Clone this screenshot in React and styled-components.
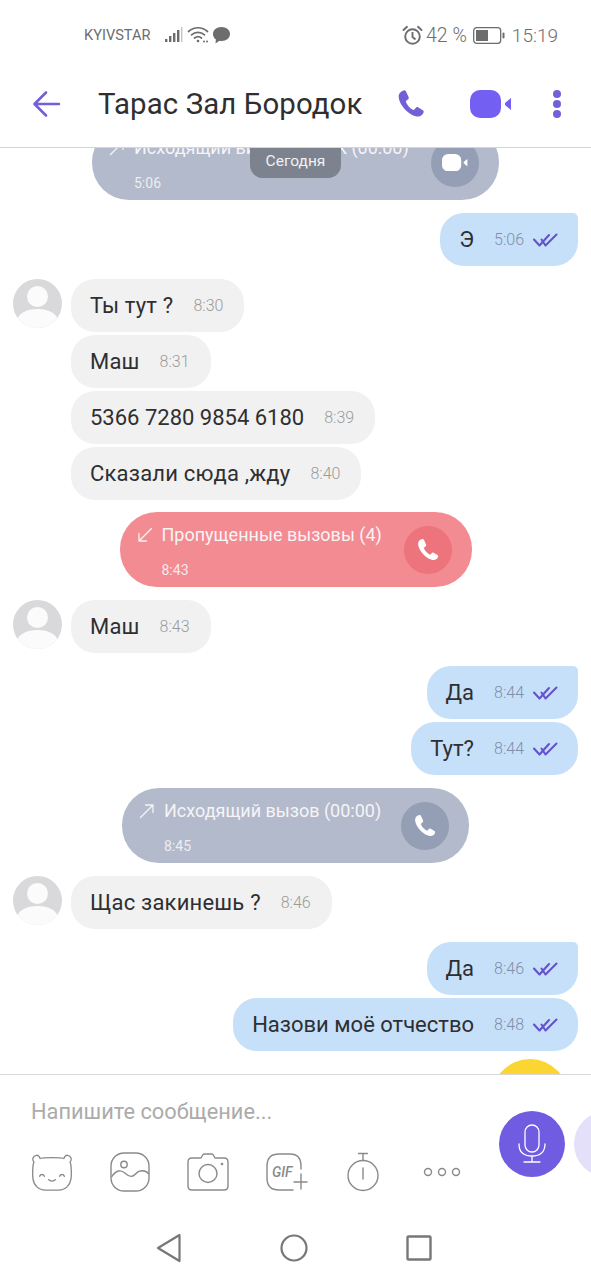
import styled, { createGlobalStyle } from 'styled-components';

const GlobalStyle = createGlobalStyle`
  html, body {
    margin: 0;
    padding: 0;
    background: #fff;
  }
  * {
    box-sizing: border-box;
  }
  body {
    font-family: Roboto, "Liberation Sans", sans-serif;
  }
`;

const Screen = styled.div`
  width: 591px;
  height: 1280px;
  display: flex;
  flex-direction: column;
  overflow: hidden;
  background: #fff;
  color: #2c2c2e;
`;

const StatusBar = styled.div`
  height: 70px;
  flex: none;
  display: flex;
  align-items: center;
  justify-content: space-between;
  padding: 0 33px 0 84px;
  color: #6d6d6d;
`;

const StatusGroup = styled.div`
  display: flex;
  align-items: center;
  gap: ${(p) => p.$gap || 3}px;
`;

const Carrier = styled.span`
  font-size: 14.6px;
  margin-right: 10px;
`;

const StatusText = styled.span`
  font-size: ${(p) => p.$size || 19}px;
  font-weight: 300;
`;

const AlarmSlot = styled.span`
  display: flex;
  margin-right: -3px;
`;

const Header = styled.div`
  height: 78px;
  flex: none;
  display: flex;
  align-items: center;
  padding: 0 29px 10px 32px;
  border-bottom: 1px solid #d4d4d4;
`;

const Title = styled.div`
  font-size: 29.4px;
  margin-left: 37px;
  flex: 1;
  color: #2f2f31;
  letter-spacing: 0.1px;
`;

const HeaderIcons = styled.div`
  display: flex;
  align-items: center;
`;

const HeaderGap = styled.div`
  width: ${(p) => p.$width}px;
`;

const Chat = styled.div`
  position: relative;
  flex: 1;
  min-height: 0;
  overflow: hidden;
  display: flex;
  flex-direction: column;
  padding: 0 13px;
`;

const DateBadge = styled.div`
  position: absolute;
  top: 0;
  left: 250px;
  width: 91px;
  height: 30px;
  background: #7d828f;
  color: #f1f1f3;
  font-size: 15.5px;
  text-align: center;
  line-height: 26px;
  border-radius: 0 0 13px 13px;
`;

const CallBubble = styled.div`
  flex: none;
  align-self: center;
  width: ${(p) => p.$width}px;
  height: 75px;
  margin-top: ${(p) => p.$top ?? 12}px;
  border-radius: 37px;
  background: ${(p) => p.$bg};
  display: flex;
  align-items: center;
  justify-content: space-between;
  padding: 0 20px 0 17px;
  color: #f7f4f6;
`;

const CallInfo = styled.div`
  display: flex;
  flex-direction: column;
  gap: 17px;
  padding-top: 3px;
`;

const CallTitle = styled.div`
  display: flex;
  align-items: center;
  gap: 9px;
  font-size: 18px;
  line-height: 20px;
  white-space: nowrap;
`;

const CallTime = styled.div`
  font-size: 14px;
  line-height: 16px;
  margin-left: 25px;
  opacity: 0.9;
`;

const CallIconCircle = styled.div`
  width: 48px;
  height: 48px;
  border-radius: 50%;
  background: ${(p) => p.$bg};
  display: flex;
  align-items: center;
  justify-content: center;
`;

const Group = styled.div`
  flex: none;
  display: flex;
  margin-top: 13px;
  gap: 9px;
  justify-content: ${(p) => (p.$out ? 'flex-end' : 'flex-start')};
`;

const Avatar = styled.div`
  width: 49px;
  height: 49px;
  border-radius: 50%;
  flex: none;
  overflow: hidden;
  background: #d9d9dc;
`;

const Stack = styled.div`
  display: flex;
  flex-direction: column;
  gap: 3px;
  align-items: ${(p) => (p.$out ? 'flex-end' : 'flex-start')};
`;

const Bubble = styled.div`
  height: 53px;
  display: flex;
  align-items: center;
  padding: ${(p) => (p.$out ? '0 20px 0 19px' : '0 21px 0 19px')};
  border-radius: 24px;
  border-top-right-radius: ${(p) => (p.$first ? 5 : 24)}px;
  background: ${(p) => (p.$out ? '#c6e0fa' : '#f1f1f1')};
`;

const BubbleText = styled.span`
  font-size: 22px;
  letter-spacing: ${(p) => p.$spacing}px;
  color: #2f2f31;
  white-space: nowrap;
`;

const BubbleTime = styled.span`
  font-size: 16px;
  font-weight: 300;
  margin-left: 20px;
  color: ${(p) => (p.$out ? '#7f8fa6' : '#9b9b9b')};
`;

const Ticks = styled.svg`
  margin-left: 9px;
`;

const StickerTop = styled.div`
  position: absolute;
  left: 490px;
  bottom: -70px;
  width: 80px;
  height: 85px;
  border-radius: 50%;
  background: #fbd531;
`;

const Composer = styled.div`
  height: 141px;
  flex: none;
  border-top: 1px solid #d8d8d8;
  display: flex;
  overflow: hidden;
`;

const ComposerMain = styled.div`
  flex: 1;
  display: flex;
  flex-direction: column;
  padding: 24px 0 0 31px;
`;

const Placeholder = styled.div`
  font-size: 21.8px;
  line-height: 26px;
  color: #ababab;
`;

const AttachRow = styled.div`
  display: flex;
  align-items: center;
  margin-top: 27px;
  gap: 37px;
`;

const DotsSvg = styled.svg`
  margin-left: 5px;
`;

const ComposerActions = styled.div`
  flex: none;
  display: flex;
  gap: 9px;
  padding-top: 36px;
  margin-right: -49px;
`;

const ActionCircle = styled.div`
  width: 66px;
  height: 66px;
  border-radius: 50%;
  background: ${(p) => p.$bg};
  display: flex;
  align-items: center;
  justify-content: center;
`;

const NavBar = styled.div`
  flex: none;
  height: 65px;
  display: flex;
  align-items: center;
  justify-content: center;
  gap: 98px;
  padding-right: 3px;
`;

function Signal() {
  return (
    <svg width="20" height="18" viewBox="0 0 20 18" fill="#6d6d6d">
      <rect x="1" y="13" width="2.4" height="3" />
      <rect x="5" y="10" width="2.4" height="6" />
      <rect x="9" y="7" width="2.4" height="9" />
      <rect x="13" y="4" width="2.4" height="12" />
      <rect x="17" y="1" width="1.4" height="15" fill="#c4c4c4" />
    </svg>
  );
}

function Wifi() {
  return (
    <svg width="22" height="18" viewBox="0 0 22 18" fill="none" stroke="#6d6d6d" strokeWidth="1.7" strokeLinecap="round">
      <path d="M1.5 5.5C7 .5 15 .5 20.5 5.5" />
      <path d="M4.5 8.8C8.2 5.5 13.8 5.5 17.5 8.8" />
      <path d="M7.5 12C9.5 10.4 12.5 10.4 14.5 12" />
      <circle cx="11" cy="15" r="1.3" fill="#6d6d6d" stroke="none" />
      <circle cx="17" cy="15.5" r="1" fill="#6d6d6d" stroke="none" />
      <circle cx="20" cy="15.5" r="1" fill="#6d6d6d" stroke="none" />
    </svg>
  );
}

function ChatGlyph() {
  return (
    <svg width="19" height="18" viewBox="0 0 19 18" fill="#6d6d6d">
      <path d="M9.5 1C14.5 1 18 4 18 8c0 4-3.5 7-8.5 7-.8 0-1.4 0-2-.2L3.5 17.5l.4-4C2 12.2 1 10.3 1 8c0-4 3.5-7 8.5-7z" />
    </svg>
  );
}

function Alarm() {
  return (
    <svg width="21" height="21" viewBox="0 0 21 21" fill="none" stroke="#6d6d6d" strokeWidth="1.9">
      <circle cx="10.5" cy="11.5" r="7.3" />
      <path d="M10.5 7v5l3 2.5" />
      <path d="M1.5 5L5 1.8M19.5 5L16 1.8" strokeLinecap="round" />
    </svg>
  );
}

function Battery() {
  return (
    <svg width="32" height="17" viewBox="0 0 32 17">
      <rect x="0.7" y="0.7" width="27" height="15.6" rx="3" fill="none" stroke="#6d6d6d" strokeWidth="1.3" />
      <rect x="3" y="3" width="12" height="11" fill="#6d6d6d" />
      <rect x="29.5" y="5.5" width="2" height="6" rx="1" fill="#6d6d6d" />
    </svg>
  );
}

function BackArrow() {
  return (
    <svg width="29" height="28" viewBox="0 0 29 28" fill="none" stroke="#7360d8" strokeWidth="2.6" strokeLinecap="round" strokeLinejoin="round">
      <path d="M27 14H3M14 2.5L2.5 14 14 25.5" />
    </svg>
  );
}

const phonePath =
  'M6.6 1.2c-1.1.3-4.3 2-4.3 5 0 7.2 9.3 17.6 17.2 17.6 2.6 0 4.3-2.6 4.5-3.8.1-.7-.2-1.2-.8-1.6l-4.1-2.5c-.7-.4-1.4-.3-1.9.3l-1.5 1.7c-.3.3-.6.3-1 .1-2.7-1.4-5-4-6.1-6.8-.1-.4 0-.7.3-1l1.6-1.3c.6-.5.7-1.2.4-1.9L8.7 2.1c-.4-.8-1.2-1.1-2.1-.9z';

function Phone({ size, color }) {
  return (
    <svg width={size} height={size} viewBox="0 0 26 26" fill={color}>
      <path d={phonePath} />
    </svg>
  );
}

function VideoIcon({ width, color }) {
  return (
    <svg width={width} height={(width * 28) / 42} viewBox="0 0 42 28" fill={color}>
      <rect x="0" y="0" width="31" height="28" rx="10" />
      <path d="M41 8v12l-6-5v-2z" />
    </svg>
  );
}

function MoreDots() {
  return (
    <svg width="10" height="30" viewBox="0 0 10 30" fill="#7360d8">
      <circle cx="5" cy="5" r="4" />
      <circle cx="5" cy="15" r="4" />
      <circle cx="5" cy="25" r="4" />
    </svg>
  );
}

function DoubleTick() {
  return (
    <Ticks width="25" height="14" viewBox="0 0 25 14" fill="none" stroke="#6454cc" strokeWidth="2.1" strokeLinecap="round" strokeLinejoin="round">
      <path d="M1 6.5L6.5 12.5 16 2" />
      <path d="M8.5 6.5L12.5 12.5 23.5 1.5" />
    </Ticks>
  );
}

function Person() {
  return (
    <svg width="49" height="49" viewBox="0 0 49 49">
      <circle cx="24.5" cy="17.5" r="10.5" fill="#fbfbfb" />
      <ellipse cx="24.5" cy="41" rx="20" ry="11" fill="#fbfbfb" />
    </svg>
  );
}

function CallArrow({ missed }) {
  return (
    <svg width="16" height="16" viewBox="0 0 16 16" fill="none" stroke="#f7f4f6" strokeWidth="1.3" strokeLinecap="round" strokeLinejoin="round">
      {missed ? <path d="M14.5 1.5L2 14M2 6.5V14h7.5" /> : <path d="M1.5 14.5L14 2M6.5 2H14v7.5" />}
    </svg>
  );
}

function BearIcon() {
  return (
    <svg width="42" height="40" viewBox="0 0 44 42" fill="none" stroke="#8a8a8a" strokeWidth="1.4" strokeLinecap="round">
      <path d="M9 7C10 6 7.5 3 5.5 3.5 2 4 .5 8 3 10.5 1.5 14 1.5 24 2 28c.8 7 6 12 13 12h14c7 0 12-5 13-12 .5-4 .5-14-1-17.5C43.5 8 42 4 38.5 3.5 36.5 3 34 6 35 7c-3.5-1.5-22.5-1.5-26 0z" />
      <path d="M9 25.5c1-2.5 4-2.5 5 0M30 25.5c1-2.5 4-2.5 5 0M18.5 29c1.5 2 5.5 2 7 0" />
    </svg>
  );
}

function GalleryIcon() {
  return (
    <svg width="40" height="40" viewBox="0 0 40 40" fill="none" stroke="#8a8a8a" strokeWidth="1.4">
      <rect x="1" y="1" width="38" height="38" rx="13" />
      <circle cx="14" cy="12.5" r="3.2" />
      <path d="M1.5 25c5-8 10-7 14-3.5s7 4 10 .5 9-5 13.5 0" />
    </svg>
  );
}

function CameraIcon() {
  return (
    <svg width="42" height="38" viewBox="0 0 42 38" fill="none" stroke="#8a8a8a" strokeWidth="1.4" strokeLinejoin="round">
      <path d="M5 5h9l2-3.5c.5-.5 1-.5 1.5-.5h7c.5 0 1 0 1.5.5L28 5h9c2.5 0 4 1.5 4 4v24c0 2.5-1.5 4-4 4H5c-2.5 0-4-1.5-4-4V9c0-2.5 1.5-4 4-4z" />
      <circle cx="21" cy="20.5" r="9" />
      <circle cx="35" cy="11" r="1.3" fill="#8a8a8a" stroke="none" />
    </svg>
  );
}

function GifIcon() {
  return (
    <svg width="42" height="38" viewBox="0 0 42 38" fill="none" stroke="#8a8a8a" strokeWidth="1.4" strokeLinecap="round">
      <path d="M35 16V13C35 5 31 1 24 1H13C5 1 1 5 1 13v12c0 8 4 12 12 12h14" />
      <text x="6" y="23.5" fontFamily="Roboto, sans-serif" fontSize="14" fontStyle="italic" fontWeight="500" fill="#8a8a8a" stroke="none">GIF</text>
      <path d="M35 21v15M28 29h13" />
    </svg>
  );
}

function TimerIcon() {
  return (
    <svg width="36" height="40" viewBox="0 0 36 40" fill="none" stroke="#8a8a8a" strokeWidth="1.4" strokeLinecap="round">
      <circle cx="18" cy="23.5" r="15" />
      <path d="M18 8.5V2M13.5 1.5h9M18 16v11" />
    </svg>
  );
}

function DotsIcon() {
  return (
    <DotsSvg width="38" height="12" viewBox="0 0 38 12" fill="none" stroke="#8a8a8a" strokeWidth="1.4">
      <circle cx="5" cy="6" r="3.5" />
      <circle cx="19" cy="6" r="3.5" />
      <circle cx="33" cy="6" r="3.5" />
    </DotsSvg>
  );
}

function Mic() {
  return (
    <svg width="28" height="40" viewBox="0 0 28 40" fill="none" stroke="#fff" strokeWidth="1.3" strokeLinecap="round">
      <rect x="7" y="1" width="14" height="27" rx="7" />
      <path d="M1 20c0 8 5 12 13 12s13-4 13-12M14 32v6M6 38h16" />
    </svg>
  );
}

function NavIcons() {
  return (
    <>
      <svg width="26" height="30" viewBox="0 0 26 30" fill="none" stroke="#777" strokeWidth="2.2" strokeLinejoin="round">
        <path d="M23.5 2L2 15l21.5 13z" />
      </svg>
      <svg width="28" height="28" viewBox="0 0 28 28" fill="none" stroke="#777" strokeWidth="2.2">
        <circle cx="14" cy="14" r="12.5" />
      </svg>
      <svg width="26" height="26" viewBox="0 0 26 26" fill="none" stroke="#777" strokeWidth="2.4">
        <rect x="1.5" y="1.5" width="23" height="23" rx="1" />
      </svg>
    </>
  );
}

function Message({ out, first, text, time }) {
  const spacing = out || /^\d/.test(text) ? 0 : 0.2;
  return (
    <Bubble $out={out} $first={first}>
      <BubbleText $spacing={spacing}>{text}</BubbleText>
      <BubbleTime $out={out}>{time}</BubbleTime>
      {out && <DoubleTick />}
    </Bubble>
  );
}

function Incoming({ messages }) {
  return (
    <Group>
      <Avatar>
        <Person />
      </Avatar>
      <Stack>
        {messages.map(([text, time], i) => (
          <Message key={i} text={text} time={time} />
        ))}
      </Stack>
    </Group>
  );
}

function Outgoing({ messages }) {
  return (
    <Group $out>
      <Stack $out>
        {messages.map(([text, time], i) => (
          <Message key={i} out first={i === 0} text={text} time={time} />
        ))}
      </Stack>
    </Group>
  );
}

export default function App() {
  return (
    <Screen>
      <GlobalStyle />
      <StatusBar>
        <StatusGroup>
          <Carrier>KYIVSTAR</Carrier>
          <Signal />
          <Wifi />
          <ChatGlyph />
        </StatusGroup>
        <StatusGroup $gap={6}>
          <AlarmSlot>
            <Alarm />
          </AlarmSlot>
          <StatusText $size={19.5}>42 %</StatusText>
          <StatusGroup $gap={7}>
            <Battery />
            <StatusText>15:19</StatusText>
          </StatusGroup>
        </StatusGroup>
      </StatusBar>

      <Header>
        <BackArrow />
        <Title>Тарас Зал Бородок</Title>
        <HeaderIcons>
          <Phone size={30} color="#7360d8" />
          <HeaderGap $width={44} />
          <VideoIcon width={42} color="#7360f2" />
          <HeaderGap $width={40} />
          <MoreDots />
        </HeaderIcons>
      </Header>

      <Chat>
        <CallBubble $width={407} $top={-23} $bg="#b2bacb">
          <CallInfo>
            <CallTitle>
              <CallArrow />
              Исходящий видеозвонок (00:00)
            </CallTitle>
            <CallTime>5:06</CallTime>
          </CallInfo>
          <CallIconCircle $bg="#949eb5">
            <VideoIcon width={26} color="#fff" />
          </CallIconCircle>
        </CallBubble>
        <DateBadge>Сегодня</DateBadge>

        <Outgoing messages={[['Э', '5:06']]} />
        <Incoming
          messages={[
            ['Ты тут ?', '8:30'],
            ['Маш', '8:31'],
            ['5366 7280 9854 6180', '8:39'],
            ['Сказали сюда ,жду', '8:40'],
          ]}
        />

        <CallBubble $width={352} $bg="#f38b92">
          <CallInfo>
            <CallTitle>
              <CallArrow missed />
              Пропущенные вызовы (4)
            </CallTitle>
            <CallTime>8:43</CallTime>
          </CallInfo>
          <CallIconCircle $bg="#ed737c">
            <Phone size={24} color="#fff" />
          </CallIconCircle>
        </CallBubble>

        <Incoming messages={[['Маш', '8:43']]} />
        <Outgoing
          messages={[
            ['Да', '8:44'],
            ['Тут?', '8:44'],
          ]}
        />

        <CallBubble $width={347} $top={13} $bg="#b2bacb">
          <CallInfo>
            <CallTitle>
              <CallArrow />
              Исходящий вызов (00:00)
            </CallTitle>
            <CallTime>8:45</CallTime>
          </CallInfo>
          <CallIconCircle $bg="#949eb5">
            <Phone size={24} color="#fff" />
          </CallIconCircle>
        </CallBubble>

        <Incoming messages={[['Щас закинешь ?', '8:46']]} />
        <Outgoing
          messages={[
            ['Да', '8:46'],
            ['Назови моё отчество', '8:48'],
          ]}
        />
        <StickerTop />
      </Chat>

      <Composer>
        <ComposerMain>
          <Placeholder>Напишите сообщение...</Placeholder>
          <AttachRow>
            <BearIcon />
            <GalleryIcon />
            <CameraIcon />
            <GifIcon />
            <TimerIcon />
            <DotsIcon />
          </AttachRow>
        </ComposerMain>
        <ComposerActions>
          <ActionCircle $bg="#6f5ce0">
            <Mic />
          </ActionCircle>
          <ActionCircle $bg="#e4e0fa" />
        </ComposerActions>
      </Composer>

      <NavBar>
        <NavIcons />
      </NavBar>
    </Screen>
  );
}
